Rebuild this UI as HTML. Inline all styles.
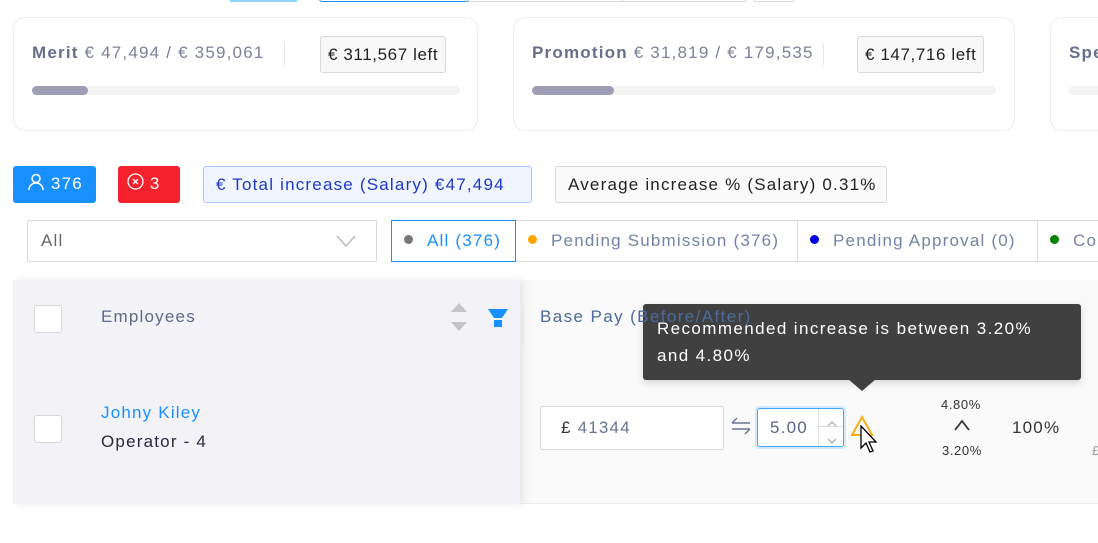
<!DOCTYPE html>
<html><head><meta charset="utf-8"><style>
*{box-sizing:border-box;margin:0;padding:0}
body{width:1098px;height:543px;overflow:hidden;background:#fff;font-family:"Liberation Sans",sans-serif;position:relative;color:#333;letter-spacing:1.2px}
.a{position:absolute}
.card{position:absolute;top:17px;height:114px;border:1px solid #ececec;border-radius:12px;background:#fff}
.ct{position:absolute;top:40px;font-size:17px;color:#7c8197;white-space:nowrap}
.ct b{color:#676f8a}
.sep{position:absolute;top:42px;width:1px;height:22px;background:#e6e6e6}
.left{position:absolute;top:36px;height:37px;border:1px solid #d9d9d9;border-radius:3px;background:#f8f8f8;font-size:17px;color:#222;line-height:35px;padding:0 7px;white-space:nowrap;letter-spacing:0.6px}
.pb{position:absolute;top:86px;height:9px;border-radius:5px;background:#f3f3f3}
.pb i{position:absolute;left:0;top:0;height:9px;border-radius:5px;background:#9e9db5}
.bd{position:absolute;top:166px;height:37px;border-radius:3px;font-size:17px;line-height:35px;white-space:nowrap}
.tab{position:absolute;top:220px;height:42px;border:1px solid #d9d9d9;font-size:17px;line-height:40px;color:#7483a5;white-space:nowrap;padding-left:12px;overflow:hidden}
.dot{display:inline-block;width:9px;height:9px;border-radius:50%;margin-right:14px;vertical-align:2px}
.cb{position:absolute;width:28px;height:28px;border:1px solid #d9d9d9;border-radius:3px;background:#fff}
</style></head><body>
<div class="a" style="left:230px;top:0;width:67px;height:2px;background:#91d5ff"></div>
<div class="a" style="left:319px;top:-10px;width:150px;height:12px;border:1px solid #1890ff;border-radius:3px"></div>
<div class="a" style="left:468px;top:-10px;width:155px;height:12px;border:1px solid #d9d9d9"></div>
<div class="a" style="left:622px;top:-10px;width:124px;height:12px;border:1px solid #d9d9d9"></div>
<div class="a" style="left:753px;top:-10px;width:42px;height:12px;border:1px solid #d9d9d9;border-radius:3px"></div>

<div class="card" style="left:13px;width:465px">
 <div class="ct" style="left:18px;top:25px"><b>Merit</b> € 47,494 / € 359,061</div>
 <div class="sep" style="left:270px;top:25px"></div>
 <div class="left" style="left:306px;top:18px">€ 311,567 left</div>
 <div class="pb" style="left:18px;top:68px;width:428px"><i style="width:56px"></i></div>
</div>
<div class="card" style="left:513px;width:502px">
 <div class="ct" style="left:18px;top:25px"><b>Promotion</b> € 31,819 / € 179,535</div>
 <div class="sep" style="left:309px;top:25px"></div>
 <div class="left" style="left:343px;top:18px">€ 147,716 left</div>
 <div class="pb" style="left:18px;top:68px;width:464px"><i style="width:82px"></i></div>
</div>
<div class="card" style="left:1050px;width:100px">
 <div class="ct" style="left:18px;top:25px"><b>Spe</b></div>
 <div class="pb" style="left:18px;top:68px;width:80px"></div>
</div>

<div class="bd" style="left:13px;width:83px;background:#1890ff;color:#fff;padding-left:14px">
 <svg width="18" height="18" viewBox="0 0 18 18" style="vertical-align:-2px" fill="none" stroke="#fff" stroke-width="1.5"><circle cx="9" cy="5.5" r="4"/><path d="M2 17c0-4 3-7 7-7s7 3 7 7"/></svg> 376</div>
<div class="bd" style="left:118px;width:62px;background:#f5222d;color:#fff;padding-left:9px">
 <svg width="17" height="17" viewBox="0 0 17 17" style="vertical-align:-1px" fill="none" stroke="#fff" stroke-width="1.3"><circle cx="8.5" cy="8.5" r="7.5"/><path d="M6 6l5 5M11 6l-5 5"/></svg> 3</div>
<div class="bd" style="left:203px;width:329px;background:#f0f5ff;border:1px solid #adc6ff;color:#1d39c4;padding-left:12px">€ Total increase (Salary) €47,494</div>
<div class="bd" style="left:555px;width:332px;background:#fafafa;border:1px solid #d9d9d9;color:#222;padding-left:12px">Average increase % (Salary) 0.31%</div>

<div class="a" style="left:27px;top:220px;width:350px;height:42px;border:1px solid #d9d9d9;border-radius:2px;font-size:17px;line-height:40px;color:#666;padding-left:13px">All
 <svg class="a" style="left:308px;top:13px" width="20" height="14" viewBox="0 0 20 14" fill="none" stroke="#bbb" stroke-width="1.5"><path d="M1 2l9 10 9-10"/></svg></div>
<div class="tab" style="left:391px;width:125px;border-color:#1890ff;color:#1890ff;z-index:2"><span class="dot" style="background:#777"></span>All (376)</div>
<div class="tab" style="left:515px;width:283px"><span class="dot" style="background:#ffa500"></span>Pending Submission (376)</div>
<div class="tab" style="left:797px;width:241px"><span class="dot" style="background:#0000e6"></span>Pending Approval (0)</div>
<div class="tab" style="left:1037px;width:80px"><span class="dot" style="background:#008000"></span>Co</div>

<div class="a" style="left:520px;top:280px;width:578px;height:224px;background:#fafafa;border-bottom:1px solid #eee"></div>
<div class="a" style="left:13px;top:280px;width:507px;height:224px;background:#f2f2f7;box-shadow:4px 0 8px rgba(0,0,0,0.08)"></div>
<div class="cb" style="left:34px;top:305px"></div>
<div class="a" style="left:101px;top:307px;font-size:17px;color:#5e6a88">Employees</div>
<svg class="a" style="left:450px;top:303px" width="18" height="30" viewBox="0 0 18 30"><path d="M9 0l8 9H1z" fill="#c4c4c4"/><path d="M1 19h16l-8 9z" fill="#c4c4c4"/></svg>
<svg class="a" style="left:488px;top:309px" width="20" height="19" viewBox="0 0 20 19"><path d="M0 0h20l-6 9H6z" fill="#1890ff"/><path d="M6 11h8v7H6z" fill="#1890ff"/></svg>
<div class="a" style="left:522px;top:305px;width:2px;height:40px;background:#e8e8e8"></div>
<div class="a" style="left:1012px;top:307px;font-size:17px;color:#333">FTE</div>

<div class="cb" style="left:34px;top:415px"></div>
<div class="a" style="left:101px;top:403px;font-size:17px;color:#1890ff">Johny Kiley</div>
<div class="a" style="left:101px;top:432px;font-size:17px;color:#2a2a3a">Operator - 4</div>

<div class="a" style="left:540px;top:406px;width:184px;height:44px;border:1px solid #d9d9d9;border-radius:3px;background:#fff;font-size:17px;line-height:42px;padding-left:20px;color:#6b7593"><span style="color:#333">£</span>&nbsp;41344</div>
<svg class="a" style="left:731px;top:417px" width="20" height="18" viewBox="0 0 20 18" fill="none" stroke="#6b7593" stroke-width="1.5"><path d="M1 6h18M1 6l5-5M19 12H1M19 12l-5 5"/></svg>
<div class="a" style="left:755px;top:406px;width:91px;height:43px;border-radius:4px;background:#d4e8fb"></div>
<div class="a" style="left:757px;top:408px;width:87px;height:39px;border:1px solid #40a9ff;border-radius:3px;background:#fff;font-size:17px;line-height:37px;padding-left:12px;color:#5a6585;overflow:hidden">5.00
 <div class="a" style="left:60px;top:0;width:26px;height:37px;border-left:1px solid #ddd;background:#fff"><div style="border-bottom:1px solid #ddd;height:18px"><svg width="26" height="18" viewBox="0 0 26 18" fill="none" stroke="#999" stroke-width="1"><path d="M9 11l4-4 4 4"/></svg></div><svg width="26" height="18" viewBox="0 0 26 18" fill="none" stroke="#999" stroke-width="1"><path d="M9 6l4 4 4-4"/></svg></div></div>
<svg class="a" style="left:850px;top:415px" width="24" height="22" viewBox="0 0 24 22" fill="none" stroke="#faad14" stroke-width="2"><path d="M12 2L2 20h20z"/></svg>
<svg class="a" style="left:859px;top:425px" width="22" height="30" viewBox="0 0 22 30"><path d="M2 1v22l5-5 4 9 3-1-4-9h7z" fill="#fff" stroke="#000" stroke-width="1.3"/></svg>
<div class="a" style="left:941px;top:397px;font-size:13px;color:#333;letter-spacing:0.6px">4.80%</div>
<svg class="a" style="left:954px;top:419px" width="16" height="12" viewBox="0 0 16 12" fill="none" stroke="#333" stroke-width="1.8"><path d="M1 11l7-9 7 9"/></svg>
<div class="a" style="left:942px;top:443px;font-size:13px;color:#333;letter-spacing:0.6px">3.20%</div>
<div class="a" style="left:1012px;top:418px;font-size:17px;color:#333">100%</div>
<div class="a" style="left:1092px;top:443px;font-size:13px;color:#999">£</div>

<div class="a" style="left:643px;top:304px;width:438px;height:76px;background:#404040;border-radius:3px;box-shadow:0 3px 8px rgba(0,0,0,.15);color:#fff;font-size:17px;line-height:27px;padding:11px 14px;letter-spacing:1.4px;white-space:nowrap">Recommended increase is between 3.20%<br>and 4.80%</div>
<div class="a" style="left:848px;top:379px;width:0;height:0;border-left:14px solid transparent;border-right:14px solid transparent;border-top:12px solid #404040"></div>
<div class="a" style="left:540px;top:307px;font-size:17px;color:#4c6a9b;white-space:nowrap;letter-spacing:1.4px">Base Pay (Before/After)</div>
</body></html>
